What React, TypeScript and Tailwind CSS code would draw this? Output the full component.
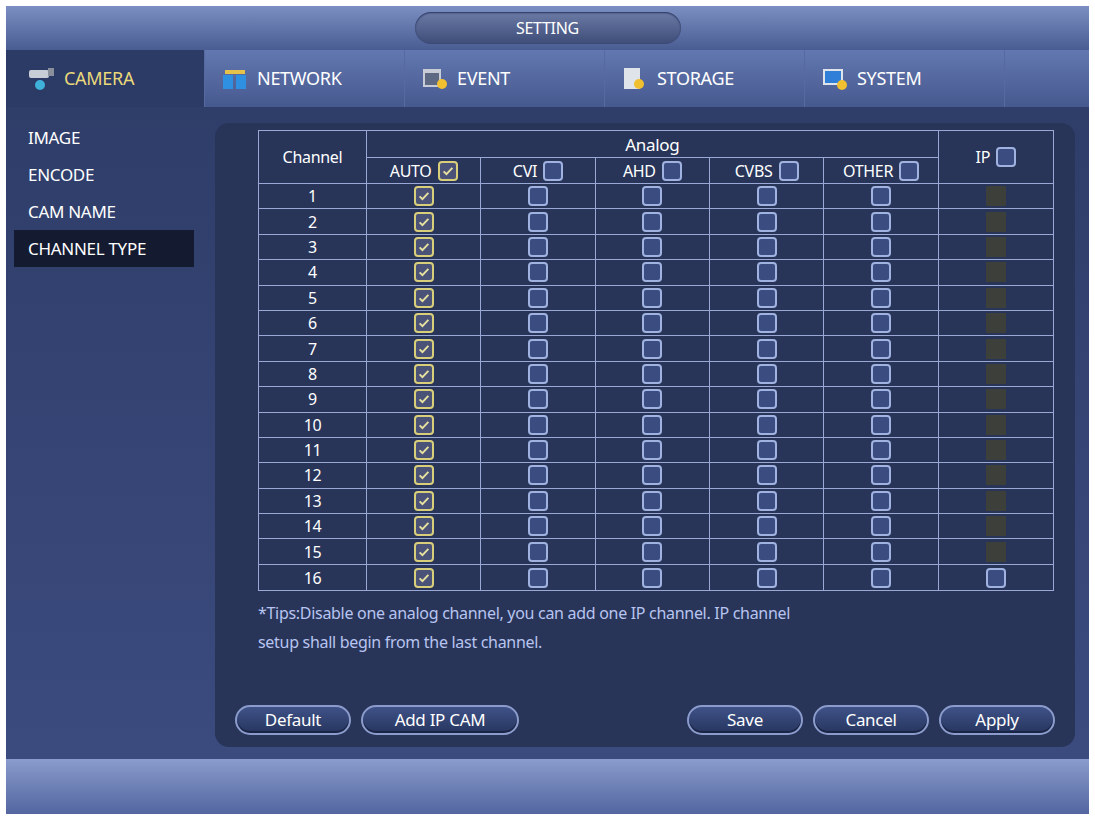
import { FC } from "react";

const Check: FC<{ on?: boolean; dim?: boolean }> = ({ on, dim }) =>
  dim ? (
    <span className="inline-block h-[20px] w-[20px] bg-[#3d3f3a]" />
  ) : on ? (
    <span className="inline-flex h-[20px] w-[20px] items-center justify-center rounded-[4px] border-2 border-[#d9cf7a] bg-[#4a5278]">
      <svg viewBox="0 0 16 16" className="h-[14px] w-[14px]">
        <path d="M3 8.5l3.2 3.2L13 4.5" fill="none" stroke="#e8e2a0" strokeWidth="2.2" />
      </svg>
    </span>
  ) : (
    <span className="inline-block h-[20px] w-[20px] rounded-[4px] border-2 border-[#9fb2e0] bg-[#3b4d80]" />
  );

const tabs = ["CAMERA", "NETWORK", "EVENT", "STORAGE", "SYSTEM"];
const cols = ["AUTO", "CVI", "AHD", "CVBS", "OTHER"];

const TabIcon: FC<{ i: number }> = ({ i }) => (
  <svg viewBox="0 0 28 24" className="h-[24px] w-[28px]">
    {i === 0 && (
      <>
        <rect x="1" y="3" width="20" height="8" rx="2" fill="#c8ccd6" />
        <rect x="20" y="1" width="6" height="8" fill="#8a8f9c" />
        <circle cx="12" cy="18" r="5" fill="#3fb0d8" />
      </>
    )}
    {i === 1 && (
      <>
        <rect x="2" y="8" width="10" height="14" fill="#2f8fe0" />
        <rect x="15" y="8" width="10" height="14" fill="#2f8fe0" />
        <rect x="4" y="3" width="20" height="4" fill="#e7c24a" />
      </>
    )}
    {i === 2 && (
      <>
        <rect x="2" y="2" width="18" height="18" fill="#c8ccd6" />
        <rect x="4" y="6" width="14" height="12" fill="#5e6a84" />
        <circle cx="21" cy="17" r="5" fill="#f0c030" />
      </>
    )}
    {i === 3 && (
      <>
        <rect x="3" y="1" width="16" height="21" fill="#dfe3ea" />
        <circle cx="18" cy="17" r="5" fill="#f0c030" />
      </>
    )}
    {i === 4 && (
      <>
        <rect x="2" y="2" width="20" height="16" fill="#dfe3ea" />
        <rect x="4" y="4" width="16" height="12" fill="#2f7fd8" />
        <circle cx="21" cy="18" r="5" fill="#f0c030" />
      </>
    )}
  </svg>
);

const Btn: FC<{ t: string; w: string }> = ({ t, w }) => (
  <button className={`${w} h-[30px] rounded-full border-2 border-[#8b9ccc] bg-gradient-to-b from-[#3f5288] to-[#27365f] text-[17px] text-white shadow-[inset_0_-2px_0_#1a2444]`}>
    {t}
  </button>
);

const App: FC = () => (
  <div className="h-[820px] w-[1095px] bg-white p-[6px] font-['Liberation_Sans'] tracking-[-0.3px]">
    <div className="flex h-full flex-col bg-[#3a4a7c]">
      <div className="flex h-[44px] items-center justify-center bg-gradient-to-b from-[#7b8fc2] to-[#4a5d93]">
        <div className="flex h-[32px] w-[266px] items-center justify-center rounded-full bg-gradient-to-b from-[#6c7ba6] to-[#3e4c78] text-[16px] text-white shadow-[inset_0_1px_2px_#22305a]">
          SETTING
        </div>
      </div>
      <div className="flex h-[57px] bg-gradient-to-b from-[#6378b0] to-[#46598f]">
        {tabs.map((t, i) => (
          <div
            key={t}
            className={`flex items-center gap-[8px] border-r border-[#5669a0] text-[18px] ${
              i === 0 ? "w-[199px] bg-[#2c3a66] pl-[22px] text-[#ead97a]" : "w-[200px] pl-[16px] text-white"
            }`}
          >
            <TabIcon i={i} />
            {t}
          </div>
        ))}
      </div>
      <div className="flex flex-1 bg-gradient-to-b from-[#2f3d69] to-[#3b4b7e]">
        <div className="flex w-[200px] flex-col pt-[12px] pl-[8px] text-[17px] text-white">
          {["IMAGE", "ENCODE", "CAM NAME", "CHANNEL TYPE"].map((t, i) => (
            <div key={t} className={`flex h-[37px] w-[180px] items-center pl-[14px] ${i === 3 ? "bg-[#141a30]" : ""}`}>
              {t}
            </div>
          ))}
        </div>
        <div className="mt-[16px] mb-[12px] ml-[9px] mr-[14px] flex flex-1 flex-col rounded-[14px] bg-[#283559] pl-[43px] pr-[21px] pt-[7px] pb-[12px]">
          <div className="grid grid-cols-[108px_repeat(6,1fr)] border border-[#9aa8d6] text-[16px] text-white">
            <div className="row-span-2 flex items-center justify-center border-r border-b border-[#9aa8d6]">Channel</div>
            <div className="col-span-5 flex h-[27px] items-end justify-center border-r border-b border-[#9aa8d6] text-[17px]">Analog</div>
            <div className="row-span-2 flex items-center justify-center gap-[6px] border-b border-[#9aa8d6]">
              IP <Check />
            </div>
            {cols.map((c) => (
              <div key={c} className="flex h-[26px] items-center justify-center gap-[6px] border-r border-b border-[#9aa8d6]">
                {c} <Check on={c === "AUTO"} />
              </div>
            ))}
            {Array.from({ length: 16 }, (_, r) => (
              <div key={r} className="contents">
                <div className={`flex h-[25.4px] items-center justify-center border-r border-[#9aa8d6] ${r < 15 ? "border-b" : ""}`}>{r + 1}</div>
                {[0, 1, 2, 3, 4, 5].map((c) => (
                  <div
                    key={c}
                    className={`flex h-[25.4px] items-center justify-center border-[#9aa8d6] ${c < 5 ? "border-r" : ""} ${r < 15 ? "border-b" : ""}`}
                  >
                    <Check on={c === 0} dim={c === 5 && r < 15} />
                  </div>
                ))}
              </div>
            ))}
          </div>
          <p className="mt-[8px] text-[16px] leading-[29px] text-[#b8c4f0]">
            *Tips:Disable one analog channel, you can add one IP channel. IP channel
            <br />
            setup shall begin from the last channel.
          </p>
          <div className="mt-auto -ml-[23px] -mr-[1px] flex gap-[10px]">
            <Btn t="Default" w="w-[116px]" />
            <Btn t="Add IP CAM" w="w-[158px]" />
            <div className="flex-1" />
            <Btn t="Save" w="w-[116px]" />
            <Btn t="Cancel" w="w-[116px]" />
            <Btn t="Apply" w="w-[116px]" />
          </div>
        </div>
      </div>
      <div className="h-[55px] bg-gradient-to-b from-[#8a9ccc] to-[#5366a0]" />
    </div>
  </div>
);

export default App;
